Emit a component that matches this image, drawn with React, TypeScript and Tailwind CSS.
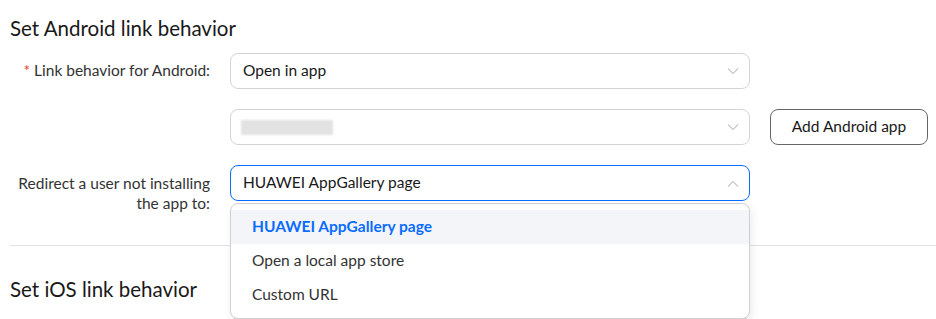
import { useState } from 'react';

const options = ['HUAWEI AppGallery page', 'Open a local app store', 'Custom URL'];

function Chevron({ up = false }: { up?: boolean }) {
  return (
    <svg width="12" height="7" viewBox="0 0 12 7" className="shrink-0">
      <path
        d={up ? 'M1 6.5 L6 1.5 L11 6.5' : 'M1 0.5 L6 5.5 L11 0.5'}
        fill="none"
        stroke="#c4c7cc"
        strokeWidth="1.1"
      />
    </svg>
  );
}

export default function App() {
  const [redirect] = useState(options[0]);

  return (
    <div
      className="w-[936px] h-[319px] overflow-hidden bg-white text-[#191919]"
      style={{ fontFamily: 'Lato, "Noto Sans", sans-serif' }}
    >
      <div className="pl-[10px] pt-[14px]">
        <h2 className="text-[20.5px] leading-[28px]">Set Android link behavior</h2>

        {/* Link behavior */}
        <div className="mt-[11px] flex items-center">
          <div className="w-[200px] text-right text-[15.5px] text-[#333]">
            <span className="text-[#e84026] mr-[4px]">*</span>Link behavior for Android:
          </div>
          <div className="ml-[20px] flex h-[36px] w-[520px] items-center justify-between rounded-[8px] border border-[#d4d4d4] pl-[12px] pr-[10px] text-[15.5px]">
            <span>Open in app</span>
            <Chevron />
          </div>
        </div>

        {/* App select */}
        <div className="mt-[20px] flex items-center">
          <div className="w-[200px]" />
          <div className="ml-[20px] flex h-[36px] w-[520px] items-center justify-between rounded-[8px] border border-[#d4d4d4] pl-[10px] pr-[10px]">
            <span className="block h-[15px] w-[92px] bg-[#e2e2e2] blur-[1px]" />
            <Chevron />
          </div>
          <button className="ml-[20px] h-[36px] w-[158px] rounded-[8px] border border-[#666] text-[15.5px] text-[#191919]">
            Add Android app
          </button>
        </div>

        {/* Redirect */}
        <div className="relative z-10 mt-[20px] flex items-start">
          <div className="w-[200px] pt-[8px] text-right text-[15.5px] leading-[20px] text-[#333]">
            Redirect a user not installing the app to:
          </div>
          <div className="relative ml-[20px] w-[520px]">
            <div className="flex h-[36px] items-center justify-between rounded-[8px] border border-[#0a6cff] pl-[12px] pr-[10px] text-[15.5px]">
              <span>{redirect}</span>
              <Chevron up />
            </div>
            <div className="absolute left-0 top-[38px] w-[520px] rounded-[8px] border border-[#d0d0d0] bg-white py-[6px] shadow-[2px_4px_10px_rgba(0,0,0,0.08)]">
              {options.map((o) => (
                <div
                  key={o}
                  className={
                    o === redirect
                      ? 'flex h-[34px] items-center bg-[#f4f5f8] pl-[21px] text-[15.5px] font-bold text-[#0a6cff]'
                      : 'flex h-[34px] items-center pl-[21px] text-[15.5px] text-[#333]'
                  }
                >
                  {o}
                </div>
              ))}
            </div>
          </div>
        </div>

        <div className="mt-[32px] h-px bg-[#e2e2e2]" />

        <h2 className="mt-[29px] text-[20.5px] leading-[28px]">Set iOS link behavior</h2>

        <div className="mt-[14px] flex items-center">
          <div className="w-[200px]" />
          <div className="ml-[20px] h-[36px] w-[520px] rounded-[8px] border border-[#d4d4d4]" />
        </div>
      </div>
    </div>
  );
}
